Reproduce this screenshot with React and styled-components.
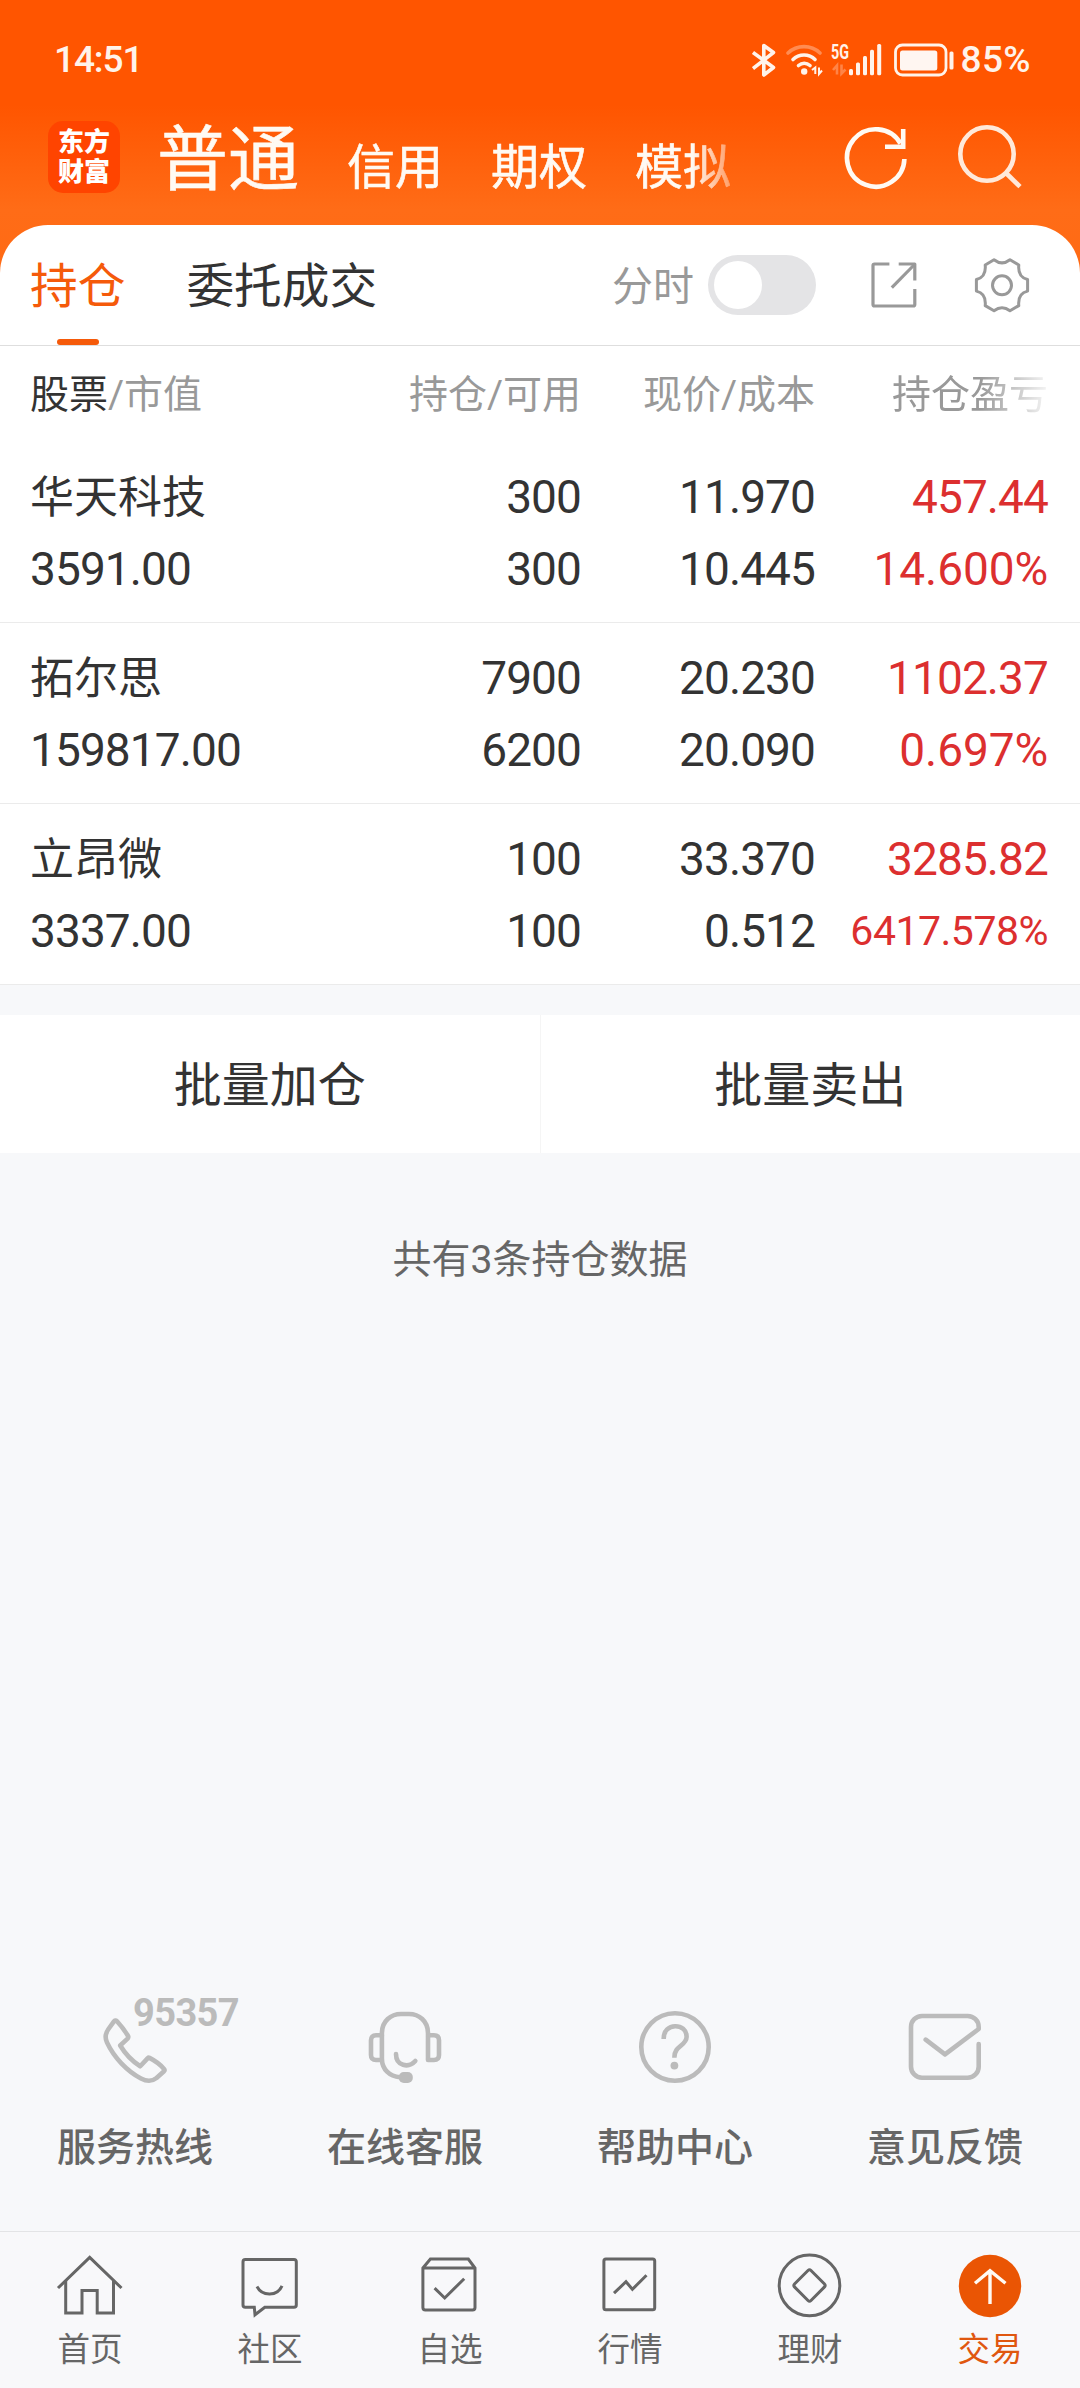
import styled, { createGlobalStyle } from 'styled-components';

const holdings = [
  { name: '华天科技', value: '3591.00', total: '300', usable: '300', price: '11.970', cost: '10.445', profit: '457.44', rate: '14.600%' },
  { name: '拓尔思', value: '159817.00', total: '7900', usable: '6200', price: '20.230', cost: '20.090', profit: '1102.37', rate: '0.697%' },
  { name: '立昂微', value: '3337.00', total: '100', usable: '100', price: '33.370', cost: '0.512', profit: '3285.82', rate: '6417.578%' },
];

const services = [
  { label: '服务热线', icon: <PhoneIcon />, badge: '95357' },
  { label: '在线客服', icon: <HeadsetIcon /> },
  { label: '帮助中心', icon: <HelpIcon /> },
  { label: '意见反馈', icon: <MailIcon /> },
];

const navItems = [
  { label: '首页', icon: <HomeIcon /> },
  { label: '社区', icon: <ChatIcon /> },
  { label: '自选', icon: <BoxIcon /> },
  { label: '行情', icon: <ChartIcon /> },
  { label: '理财', icon: <MoneyIcon /> },
  { label: '交易', icon: <TradeIcon />, active: true },
];

const App = () => {
  return (
    <Page>
      <GlobalStyle />
      <Header>
        <StatusBar>
          <Clock>14:51</Clock>
          <StatusIcons>
            <BluetoothIcon />
            <WifiIcon />
            <SignalIcon />
            <BatteryIcon />
            <span>85%</span>
          </StatusIcons>
        </StatusBar>
        <TitleBar>
          <Logo>
            <span>东方</span>
            <span>财富</span>
          </Logo>
          <Accounts>
            <Account $active>普通</Account>
            <Account>信用</Account>
            <Account>期权</Account>
            <Account>模拟</Account>
          </Accounts>
          <HeaderActions>
            <RefreshIcon />
            <SearchIcon />
          </HeaderActions>
        </TitleBar>
      </Header>

      <Card>
        <TabBar>
          <Tab $active>持仓</Tab>
          <Tab>委托成交</Tab>
          <TabTools>
            <ToolLabel>分时</ToolLabel>
            <Toggle />
            <ShareIcon />
            <GearIcon />
          </TabTools>
        </TabBar>

        <TableHead>
          <span>
            <b>股票</b>/市值
          </span>
          <span>持仓/可用</span>
          <span>现价/成本</span>
          <FadedHead>持仓盈亏</FadedHead>
        </TableHead>

        {holdings.map((item) => (
          <HoldingRow key={item.name}>
            <Name>{item.name}</Name>
            <Num>{item.total}</Num>
            <Num>{item.price}</Num>
            <Num $up>{item.profit}</Num>
            <Num>{item.value}</Num>
            <Num>{item.usable}</Num>
            <Num>{item.cost}</Num>
            <Rate $up $small={item.rate.length > 8}>
              {item.rate}
            </Rate>
          </HoldingRow>
        ))}
      </Card>

      <BatchActions>
        <BatchButton>批量加仓</BatchButton>
        <BatchButton>批量卖出</BatchButton>
      </BatchActions>

      <Summary>共有3条持仓数据</Summary>

      <Services>
        {services.map((item) => (
          <Service key={item.label}>
            <ServiceIcon>
              {item.icon}
              {item.badge && <Hotline>{item.badge}</Hotline>}
            </ServiceIcon>
            <ServiceLabel>{item.label}</ServiceLabel>
          </Service>
        ))}
      </Services>

      <BottomNav>
        {navItems.map((item) => (
          <NavItem key={item.label} $active={item.active}>
            {item.icon}
            <span>{item.label}</span>
          </NavItem>
        ))}
      </BottomNav>
    </Page>
  );
};

// Status bar icons
function BluetoothIcon() {
  return (
    <svg width="24" height="36" viewBox="0 0 24 36" fill="none" stroke="#fff3ea" strokeWidth="3.6" strokeLinejoin="round">
      <path d="M1 10.5 L21.5 25.5 L11.8 33 V3.5 L21.5 10.5 L1 26.5" />
    </svg>
  );
}

function WifiIcon() {
  return (
    <svg width="38" height="36" viewBox="0 0 38 36" fill="none" stroke="#fff3ea" strokeWidth="3.6" strokeLinecap="round">
      <path d="M2 11 C11 2.5 25 2.5 34 11" opacity="0.35" />
      <path d="M7 17.5 C13 11.5 23 11.5 29 17.5" />
      <path d="M12.5 23.5 C16 20.5 20.5 20.5 24 23.5" />
      <circle cx="18.2" cy="29.5" r="3.2" fill="#fff3ea" stroke="none" />
      <path d="M26 28 L29.3 25.5 V32 M33 25.5 V32 L36 28.5" strokeWidth="2" strokeLinecap="butt" />
    </svg>
  );
}

function SignalIcon() {
  return (
    <svg width="54" height="44" viewBox="0 -4 54 44" fill="#fff3ea">
      <text x="1" y="16.5" fontSize="20" fontWeight="700" fontFamily="Roboto, sans-serif" textLength="18" lengthAdjust="spacingAndGlyphs">
        5G
      </text>
      <path d="M3 28 L7 23.5 V32.5 M11.5 22.5 V31.5 L15.5 27.5" fill="none" stroke="#fff3ea" strokeWidth="2.6" opacity="0.3" />
      <rect x="19" y="27" width="4" height="6.3" rx="1.5" />
      <rect x="26" y="20.5" width="4" height="12.8" rx="1.5" />
      <rect x="33" y="14" width="4" height="19.3" rx="1.5" />
      <rect x="40" y="7.7" width="4" height="25.6" rx="1.5" />
      <rect x="47.2" y="2" width="4" height="31.3" rx="1.5" />
    </svg>
  );
}

function BatteryIcon() {
  return (
    <svg width="62" height="36" viewBox="0 0 62 36">
      <rect x="2.5" y="3" width="50.5" height="30" rx="7" fill="none" stroke="#fff3ea" strokeWidth="2.8" />
      <rect x="7" y="8.5" width="37.3" height="20" rx="2.5" fill="#fff6f1" />
      <rect x="56.5" y="9.5" width="4" height="18" rx="1.5" fill="#fff3ea" />
    </svg>
  );
}

// Header icons
function RefreshIcon() {
  return (
    <svg width="72" height="72" viewBox="0 0 72 72" fill="none" stroke="#fffaf3" strokeWidth="4.6">
      <path d="M64.4 38 A28.7 28.7 0 1 1 60.5 22.5" />
      <path d="M45 25.7 H63.2 V8" />
    </svg>
  );
}

function SearchIcon() {
  return (
    <svg width="72" height="72" viewBox="0 0 72 72" fill="none" stroke="#ffe9da" strokeWidth="4.6">
      <circle cx="36" cy="33" r="26.7" />
      <path d="M54.5 51.5 L69 65.7" />
    </svg>
  );
}

// Tab bar icons
function ShareIcon() {
  return (
    <svg width="48" height="48" viewBox="0 0 48 48" fill="none" stroke="#999" strokeWidth="3.2" strokeLinejoin="round">
      <path d="M19.4 3 H4.5 Q3 3 3 4.5 V43.5 Q3 45 4.5 45 H43.3 Q44.8 45 44.8 43.5 V28" />
      <path d="M28.7 3 H44.8 V19.4" />
      <path d="M44 4 L21.8 26.6" />
    </svg>
  );
}

function GearIcon() {
  return (
    <svg width="60" height="60" viewBox="0 0 60 60" fill="none" stroke="#999" strokeWidth="3" strokeLinejoin="round">
      <path d="M22 4.8 Q30 11 38 4.8 L46.8 10 C46 18 49 23 55.6 24.5 V36.1 C49 37.6 46 42.6 46.8 50.6 L38 55.8 Q30 49.6 22 55.8 L13.2 50.6 C14 42.6 11 37.6 4.4 36.1 V24.5 C11 23 14 18 13.2 10 Z" />
      <circle cx="30" cy="30.3" r="9.5" />
    </svg>
  );
}

// Service icons
function PhoneIcon() {
  return (
    <ServiceSvg viewBox="0 0 72 72">
      <path d="M14.8 10.7 L9.5 18 C6 23 5.8 27 8 31.5 C15 46.5 28 60 42 67.5 C48 70.6 53 70.6 57.5 67 L65 60.3 Q66 59.2 65 58 C61 53 56.5 50 50.5 46.9 Q49.5 46.4 48.8 47.1 L41.2 55.3 C33 50 26 42.5 21.2 34.5 L28.6 27.6 Q29.8 26.3 28.9 24.8 C25.5 19 21.5 14 18 10.2 Q16.3 8.8 14.8 10.7 Z" />
    </ServiceSvg>
  );
}

function HeadsetIcon() {
  return (
    <ServiceSvg viewBox="0 0 72 72">
      <path d="M12.9 49 V22 C12.9 10 22 3 32 3 H40 C50 3 59 10 59 22 V49 H65 Q70 49 70 44 V29.3 Q70 24.3 65 24.3 H59" />
      <path d="M12.9 24.3 H7 Q2 24.3 2 29.3 V44 Q2 49 7 49 H12.9 C13.5 58 20 65.3 31 66.3" />
      <path d="M27 43 C27 55 39.5 57.5 46.3 50" />
      <rect x="29.8" y="61" width="14" height="11" rx="5" fill="#bbb" stroke="none" />
    </ServiceSvg>
  );
}

function HelpIcon() {
  return (
    <ServiceSvg viewBox="0 0 72 72">
      <circle cx="36" cy="36" r="33.7" />
      <path d="M24.7 28 C24.2 11 48 11.5 47.6 26 C47.3 35 35 34.5 35.4 46.8" strokeLinecap="butt" />
      <circle cx="35.4" cy="54.6" r="3.9" fill="#bbb" stroke="none" />
    </ServiceSvg>
  );
}

function MailIcon() {
  return (
    <ServiceSvg viewBox="0 0 72 72">
      <path d="M16.7 28.7 L36 43.3 L69.7 18 V16 A11 11 0 0 0 58.7 5 H13 A11 11 0 0 0 2 16 V55.7 A11 11 0 0 0 13 66.7 H58.7 A11 11 0 0 0 69.7 55.7 V33" />
    </ServiceSvg>
  );
}

// Bottom navigation icons
function HomeIcon() {
  return (
    <NavSvg viewBox="0 0 72 72">
      <path d="M4 38 L35.7 7.3 L67.5 38" />
      <path d="M11.7 31 V63 H28 V40.5 H43.2 V63 H59.5 V31" />
    </NavSvg>
  );
}

function ChatIcon() {
  return (
    <NavSvg viewBox="0 0 72 72">
      <path d="M11.3 9.4 H60 Q62.3 9.4 62.3 11.7 V55 Q62.3 57.3 60 57.3 H30.8 L21 64.8 L20.3 57.3 H11.3 Q9 57.3 9 55 V11.7 Q9 9.4 11.3 9.4 Z" />
      <path d="M23 36.5 C28 46.5 43.5 46.5 48 35.8" />
    </NavSvg>
  );
}

function BoxIcon() {
  return (
    <NavSvg viewBox="0 0 72 72">
      <path d="M8.9 18 L16.4 9 H54.3 L61 18 V57.5 Q61 60 58.5 60 H11.4 Q8.9 60 8.9 57.5 Z M8.9 18 H61" />
      <path d="M20.6 38.2 L30.7 48 L50.2 28.7" />
    </NavSvg>
  );
}

function ChartIcon() {
  return (
    <NavSvg viewBox="0 0 72 72">
      <rect x="9.9" y="9" width="50.8" height="50.7" rx="2" />
      <path d="M20 43.2 L32 31.7 L38.4 39.3 L52.5 25.2" />
    </NavSvg>
  );
}

function MoneyIcon() {
  return (
    <NavSvg viewBox="0 0 72 72">
      <circle cx="35.5" cy="35.4" r="30.3" />
      <path d="M34 20.5 Q35.5 19 37 20.5 L50.5 34 Q51.8 35.4 50.5 36.9 L37 50.5 Q35.5 52 34 50.5 L20.5 36.9 Q19.2 35.4 20.5 34 Z" />
    </NavSvg>
  );
}

function TradeIcon() {
  return (
    <NavSvg viewBox="0 0 72 72">
      <circle cx="36" cy="36" r="31.2" fill="#ea5504" stroke="none" />
      <path d="M36 54 V21 M21 33.3 L36 20.8 L51.5 33.3" stroke="#fffaf3" strokeWidth="3.4" />
    </NavSvg>
  );
}

// Styled components
const GlobalStyle = createGlobalStyle`
  body {
    margin: 0;
    background: #f7f8fa;
    font-family: Roboto, 'Noto Sans CJK SC', sans-serif;
    color: #333;
  }

  svg {
    display: block;
    flex-shrink: 0;
  }
`;

const Page = styled.div`
  display: flex;
  flex-direction: column;
  width: 1080px;
  height: 2388px;
  overflow: hidden;
  background: #f7f8fa;
`;

const Header = styled.header`
  height: 273px;
  flex-shrink: 0;
  background: linear-gradient(#ff5500 105px, #ff6c17 210px, #ff6a14);
`;

const StatusBar = styled.div`
  display: flex;
  align-items: center;
  justify-content: space-between;
  height: 118px;
  padding: 0 49px 0 54px;
  box-sizing: border-box;
  color: #fff3ea;
  font-size: 37px;
  font-weight: 500;
`;

const Clock = styled.span`
  letter-spacing: -1.1px;
`;

const StatusIcons = styled.div`
  display: flex;
  align-items: center;

  svg {
    margin-top: 2px;
  }

  svg:nth-child(2) {
    margin-left: 10px;
  }

  svg:nth-child(3) {
    margin-left: 6px;
  }

  svg:nth-child(4) {
    margin-left: 9px;
  }

  span {
    margin-left: 5px;
    letter-spacing: 0.4px;
  }
`;

const TitleBar = styled.div`
  display: flex;
  align-items: flex-start;
  height: 75px;
  padding: 0 57px 0 48px;
`;

const Logo = styled.div`
  display: flex;
  flex-direction: column;
  align-items: center;
  justify-content: center;
  width: 72px;
  height: 72px;
  margin-top: 3px;
  border-radius: 15px;
  background: #ff4400;
  color: #fff;
  font-size: 26px;
  font-weight: 900;
  line-height: 30px;
`;

const Accounts = styled.nav`
  display: flex;
  align-items: baseline;
  gap: 48px;
  width: 598px;
  height: 107px;
  margin: -18px 0 0 37px;
  font-family: 'Noto Sans CJK SC', sans-serif;
  mask-image: linear-gradient(to right, #000 535px, transparent 598px);
`;

const Account = styled.span`
  flex-shrink: 0;
  color: #fffaf3;
  font-size: ${(props) => (props.$active ? 71 : 48)}px;
  line-height: 1.5;
  -webkit-text-stroke: 0.6px #fffaf3;
`;

const HeaderActions = styled.div`
  display: flex;
  gap: 39px;
  margin: 3px 0 0 auto;
`;

const Card = styled.main`
  margin-top: -48px;
  border-radius: 48px 48px 0 0;
  background: #fff;
`;

const TabBar = styled.div`
  display: flex;
  align-items: center;
  gap: 61px;
  height: 121px;
  padding: 0 48px 0 30px;
  box-sizing: border-box;
  border-bottom: 1px solid #dedede;
`;

const Tab = styled.span`
  position: relative;
  height: 120px;
  font-size: 47.7px;
  line-height: 124px;
  color: ${(props) => (props.$active ? '#f55a0a' : '#333')};

  &::after {
    content: '';
    display: ${(props) => (props.$active ? 'block' : 'none')};
    position: absolute;
    left: 50%;
    bottom: 0;
    width: 42px;
    height: 6px;
    margin-left: -21px;
    border-radius: 3px;
    background: #f55a0a;
  }
`;

const TabTools = styled.div`
  display: flex;
  align-items: center;
  margin-left: auto;

  svg:nth-of-type(1) {
    margin: 0 54px;
  }
`;

const ToolLabel = styled.span`
  margin-right: 14px;
  color: #999;
  font-size: 41px;
  line-height: 60px;
  padding-top: 3px;
`;

const Toggle = styled.div`
  width: 108px;
  height: 60px;
  padding: 6px;
  box-sizing: border-box;
  border-radius: 30px;
  background: #e4e4e6;

  &::before {
    content: '';
    display: block;
    width: 48px;
    height: 48px;
    border-radius: 50%;
    background: #fff;
  }
`;

const TableHead = styled.div`
  display: grid;
  grid-template-columns: 301px 250px 234px 233px;
  height: 96px;
  padding: 0 32px 0 30px;
  color: #999;
  font-size: 39px;
  line-height: 99px;
  text-align: right;

  span:first-child {
    text-align: left;
  }

  b {
    color: #333;
    font-weight: 400;
  }
`;

const FadedHead = styled.span`
  mask-image: linear-gradient(to right, #000 165px, rgba(0, 0, 0, 0.1) 233px);
`;

const HoldingRow = styled.div`
  display: grid;
  grid-template-columns: 301px 250px 234px 233px;
  grid-auto-rows: 72px;
  height: 181px;
  padding: 19px 32px 0 30px;
  box-sizing: border-box;
  border-bottom: 1px solid #ebebeb;
  line-height: 72px;
`;

const Name = styled.span`
  font-size: 44px;
  line-height: 75px;
`;

const Num = styled.span`
  color: ${(props) => (props.$up ? '#dc2f2f' : '#333')};
  font-size: 46px;
  letter-spacing: -0.9px;
  text-align: right;

  &:nth-child(4n + 1) {
    text-align: left;
  }
`;

const Rate = styled(Num)`
  font-size: ${(props) => (props.$small ? 41 : 46)}px;
  letter-spacing: ${(props) => (props.$small ? -0.5 : -0.1)}px;
`;

const BatchActions = styled.div`
  display: flex;
  flex-shrink: 0;
  margin-top: 30px;
  background: #fff;
`;

const BatchButton = styled.button`
  flex: 1;
  height: 138px;
  padding: 0 0 6px;
  border: 0;
  background: none;
  color: #333;
  font-family: inherit;
  font-size: 48px;

  & + & {
    border-left: 1px solid #f5f5f5;
  }
`;

const Summary = styled.p`
  margin: 77px 0 0;
  color: #666;
  font-size: 39px;
  line-height: 60px;
  text-align: center;
`;

const Services = styled.section`
  display: grid;
  grid-template-columns: repeat(4, 1fr);
  margin: auto 0 53px;
`;

const Service = styled.div`
  display: flex;
  flex-direction: column;
  align-items: center;
  gap: 35px;
`;

const ServiceIcon = styled.div`
  position: relative;
`;

const ServiceSvg = styled.svg`
  width: 72px;
  height: 72px;
  overflow: visible;
  fill: none;
  stroke: #bbb;
  stroke-width: 4.6px;
  stroke-linecap: round;
  stroke-linejoin: round;
`;

const Hotline = styled.span`
  position: absolute;
  top: -13px;
  left: 34px;
  color: #bbb;
  font-size: 38px;
  font-weight: 700;
  line-height: 30px;
  letter-spacing: -0.6px;
`;

const ServiceLabel = styled.span`
  color: #666;
  font-size: 39px;
  font-weight: 500;
  line-height: 60px;
`;

const BottomNav = styled.footer`
  display: grid;
  grid-template-columns: repeat(6, 1fr);
  flex-shrink: 0;
  height: 157px;
  padding-top: 18px;
  box-sizing: border-box;
  border-top: 1px solid #e3e4e6;
  background: #f8f8fa;
`;

const NavSvg = styled.svg`
  width: 72px;
  height: 72px;
  fill: none;
  stroke: #666;
  stroke-width: 3px;
`;

const NavItem = styled.div`
  display: flex;
  flex-direction: column;
  align-items: center;
  color: ${(props) => (props.$active ? '#e0570f' : '#666')};
  font-size: 32.5px;
  line-height: 56px;
`;

export default App;
